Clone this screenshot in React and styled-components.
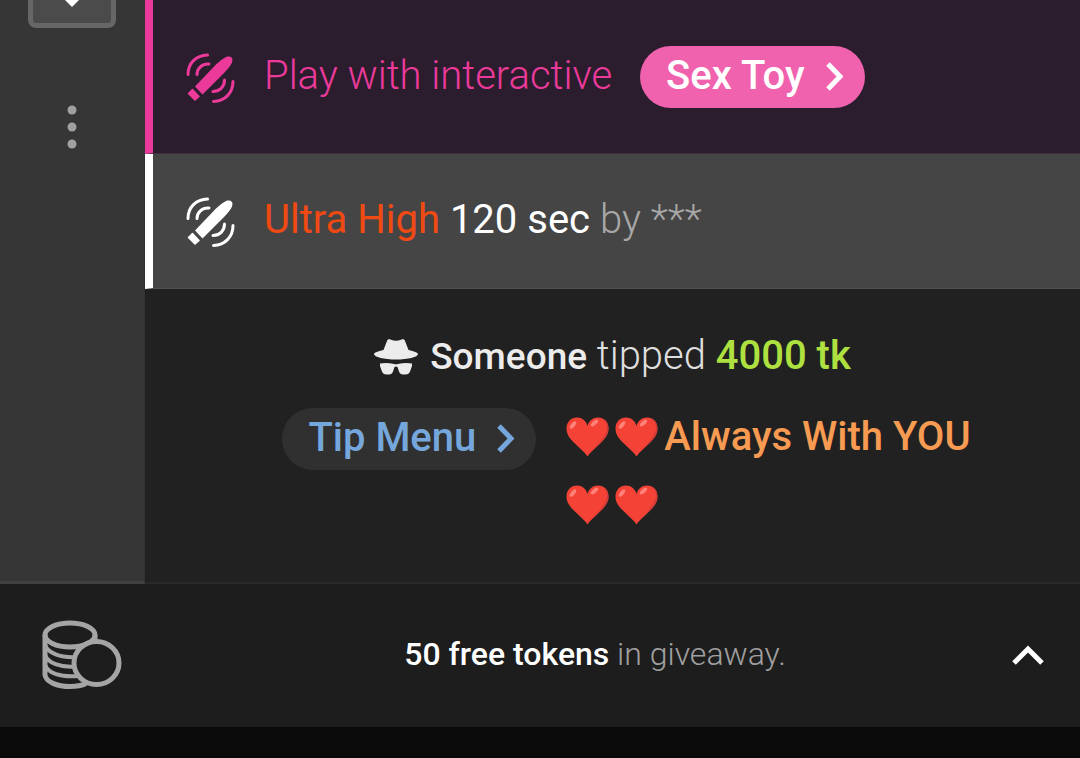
import React, { useState } from 'react';
import styled, { createGlobalStyle } from 'styled-components';

const GlobalStyle = createGlobalStyle`
  * {
    box-sizing: border-box;
  }
  body {
    margin: 0;
    background: #0a0a0a;
    font-family: Roboto, "Liberation Sans", sans-serif;
    font-size: 40px;
    line-height: 48px;
  }
  button {
    font: inherit;
    color: inherit;
    border: 0;
    cursor: pointer;
  }
  svg {
    display: block;
    flex: none;
  }
`;

const Page = styled.div`
  min-height: 100vh;
  padding-bottom: 31px;
  display: flex;
  flex-direction: column;
`;

const Content = styled.div`
  flex: 1;
  display: grid;
  grid-template-columns: 145px 1fr;
`;

const Sidebar = styled.aside`
  background: #363636;
  border-right: 1px solid #323232;
  border-bottom: 3px solid #404040;
  display: flex;
  flex-direction: column;
  align-items: center;
  gap: 74px;
`;

const DropButton = styled.button`
  width: 88px;
  height: 28px;
  padding: 0;
  display: flex;
  justify-content: center;
  align-items: flex-start;
  background: #4b4b4b;
  border: 5px solid #676767;
  border-top: 0;
  border-radius: 0 0 8px 8px;
`;

const MoreButton = styled.button`
  padding: 2px 16px;
  background: none;
  color: #a0a0a0;
`;

const Chat = styled.main`
  background: #212121;
  border-bottom: 2px solid #2a2a2a;
`;

const Notice = styled.div`
  display: flex;
  align-items: center;
  gap: 28px;
  height: ${(props) => (props.$promo ? '154px' : '135px')};
  padding: 0 32px;
  border-left: 8px solid ${(props) => (props.$promo ? '#ec3a9b' : '#fff')};
  border-bottom: 1px solid ${(props) => (props.$promo ? '#3f2f40' : '#4f4f4f')};
  background: ${(props) => (props.$promo ? '#2c1d2e' : '#454545')};
  color: ${(props) => (props.$promo ? '#ec3a9b' : '#fff')};
`;

const NoticeText = styled.p`
  margin: 0;
  padding-bottom: 2px;
  font-weight: ${(props) => (props.$light ? 300 : 400)};
`;

const Level = styled.span`
  color: #f04a14;
`;

const Author = styled.span`
  color: #a8a8a8;
  font-weight: 300;
`;

const Pill = styled.button`
  display: flex;
  align-items: center;
  gap: 18px;
  height: 62px;
  padding: 0 18px 2px 26px;
  border-radius: 32px;
  font-weight: 500;
  white-space: nowrap;
  background: ${(props) => (props.$pink ? '#f062ae' : '#303030')};
  color: ${(props) => (props.$pink ? '#fff' : '#75a7dc')};
`;

const Messages = styled.div`
  padding: 43px 24px 0;
  display: flex;
  flex-direction: column;
  align-items: center;
  gap: 27px;
`;

const TipLine = styled.p`
  margin: 0;
  display: flex;
  align-items: center;
  gap: 12px;
  color: #dedede;
  font-weight: 300;
`;

const Name = styled.strong`
  color: #ececec;
  font-size: 37px;
  font-weight: 500;
`;

const Amount = styled.strong`
  color: #aee13f;
  font-weight: 500;
`;

const MenuLine = styled.div`
  display: flex;
  align-items: flex-start;
  gap: 30px;
  padding-left: 28px;
`;

const MenuText = styled.div`
  padding-top: 5px;
  color: #f79a52;
  font-weight: 500;
  display: grid;
  gap: 20px;
`;

const HeartRow = styled.div`
  min-height: 48px;
  display: flex;
  align-items: center;
  gap: 6px;
`;

const Footer = styled.footer`
  height: 143px;
  padding: 0 32px 0 40px;
  display: grid;
  grid-template-columns: 142px 1fr 40px;
  align-items: center;
  background: #1d1d1d;
`;

const Giveaway = styled.p`
  margin: 0;
  padding-bottom: 4px;
  text-align: center;
  font-size: 32px;
  line-height: 40px;
  font-weight: 300;
  color: #a0a0a0;
`;

const Tokens = styled.strong`
  color: #fff;
  font-weight: 500;
`;

const ToggleButton = styled.button`
  padding: 0;
  background: none;
  color: #fff;
`;

function ToyIcon() {
  return (
    <svg width="51" height="54" viewBox="0 -3 51 54" fill="none" aria-hidden="true">
      <path
        d="M10 33.5 L31 11.5 Q36 6.5 41 4 C46 2.5 48.5 5 47 9.5 Q45 14 39 20 L17.5 41.5 Z"
        fill="currentColor"
      />
      <path
        d="M7.5 36.5 L14 43.5 L10 47 L3.5 40.5 Z"
        fill="currentColor"
        stroke="currentColor"
        strokeWidth="1.5"
        strokeLinejoin="round"
      />
      <path
        d="M3 21.5 C3 10 11 2.5 22.5 2 M12 21.5 C12 15.5 17 10.5 24 11 M39.5 27 C39.5 34 34.5 38.5 28 38.5 M48 28.5 C48 40 40 48 28.5 48.5"
        stroke="currentColor"
        strokeWidth="3"
        strokeLinecap="round"
      />
    </svg>
  );
}

function ChevronRight() {
  return (
    <svg width="24" height="32" viewBox="0 0 24 32" fill="none" aria-hidden="true">
      <path d="M5 4 L17 16.5 L5 29" stroke="currentColor" strokeWidth="5" />
    </svg>
  );
}

function IncognitoIcon() {
  return (
    <svg width="44" height="36" viewBox="0 0 44 36" fill="#ececec" aria-hidden="true">
      <path d="M13 2 C13.5 .2 15 0 17 .8 C20 2 24 2 27 .8 C29 0 30.5 .2 31 2 L34.5 11 C40 12.3 44 13.5 44 15 C44 18 34 20.5 22 20.5 S0 18 0 15 C0 13.5 4 12.3 9.5 11 Z" />
      <path d="M6 24.5 Q13 23.5 20 25 Q22 25.7 24 25 Q31 23.5 38 24.5 V27 L36 32.5 Q35 35.5 31.5 35.5 H29 Q26 35.5 25 32.5 L23.5 28 Q22 27 20.5 28 L19 32.5 Q18 35.5 15 35.5 H12.5 Q9 35.5 8 32.5 L6 27 Z" />
    </svg>
  );
}

function Heart() {
  return (
    <svg width="43" height="40" viewBox="0 0 43 40" role="img" aria-label="Red heart">
      <path
        d="M21.5 39.5 C19.5 36 15 32.5 9.5 27 C4 22 .5 17.5 .5 11.5 C.5 5 5 .5 11 .5 C16 .5 20 3.5 21.5 9 C23 3.5 27 .5 32 .5 C38 .5 42.5 5 42.5 11.5 C42.5 17.5 39 22 33.5 27 C28 32.5 23.5 36 21.5 39.5 Z"
        fill="#f44336"
      />
      <path
        d="M36 1.5 C40 4 41.500 8 41 12 C40 19 34 25 21.5 39 C24 35 28 32.5 33.5 27 C39 22 42.5 17.5 42.5 11.5 C42.5 6 40 2.5 36 1.5 Z"
        fill="#cf3b38"
      />
      <ellipse cx="7" cy="8" rx="2" ry="4.5" fill="#ff8278" transform="rotate(38 7 8)" />
      <ellipse cx="28.500" cy="6" rx="2" ry="4.5" fill="#ff8278" transform="rotate(48 28.5 6)" />
    </svg>
  );
}

function CoinsIcon() {
  return (
    <svg width="82" height="72" viewBox="0 0 82 72" fill="none" stroke="#a5a5a5" strokeWidth="5" aria-hidden="true">
      <ellipse cx="30" cy="15" rx="25" ry="12" />
      <path d="M5 15 V55 C6 62 17 66.5 30 66.5 C36 66.5 42 65.5 46 63.5 M55 15 V22" />
      <path d="M5 25 C8 33 20 38 37 37 M5 35 C8 43 20 47.5 35 46.5 M5 45 C8 53 20 57.5 39 56" strokeWidth="4" />
      <ellipse cx="56.5" cy="43" rx="22.5" ry="21.5" fill="#1d1d1d" />
    </svg>
  );
}

function App() {
  const [open, setOpen] = useState(false);

  return (
    <>
      <GlobalStyle />
      <Page>
        <Content>
          <Sidebar>
            <DropButton aria-label="Expand">
              <svg width="16" height="7" viewBox="0 0 16 7" aria-hidden="true">
                <path d="M1 0 H15 L8 7 Z" fill="#fff" />
              </svg>
            </DropButton>
            <MoreButton aria-label="More options">
              <svg width="10" height="46" viewBox="0 0 10 46" fill="currentColor" aria-hidden="true">
                <circle cx="5" cy="6" r="4.5" />
                <circle cx="5" cy="23" r="4.5" />
                <circle cx="5" cy="40" r="4.5" />
              </svg>
            </MoreButton>
          </Sidebar>

          <Chat>
            <Notice $promo>
              <ToyIcon />
              <NoticeText $light>Play with interactive</NoticeText>
              <Pill $pink>
                Sex Toy
                <ChevronRight />
              </Pill>
            </Notice>
            <Notice>
              <ToyIcon />
              <NoticeText>
                <Level>Ultra High</Level> 120 sec <Author>by ***</Author>
              </NoticeText>
            </Notice>

            <Messages>
              <TipLine>
                <IncognitoIcon />
                <span>
                  <Name>Someone</Name> tipped <Amount>4000 tk</Amount>
                </span>
              </TipLine>
              <MenuLine>
                <Pill>
                  Tip Menu
                  <ChevronRight />
                </Pill>
                <MenuText>
                  <HeartRow>
                    <Heart />
                    <Heart />
                    <span>Always With YOU</span>
                  </HeartRow>
                  <HeartRow>
                    <Heart />
                    <Heart />
                  </HeartRow>
                </MenuText>
              </MenuLine>
            </Messages>
          </Chat>
        </Content>

        <Footer>
          <CoinsIcon />
          <Giveaway>
            <Tokens>50 free tokens</Tokens> in giveaway.
          </Giveaway>
          <ToggleButton aria-label="Show giveaway" aria-expanded={open} onClick={() => setOpen(!open)}>
            <svg width="40" height="24" viewBox="0 0 40 24" fill="none" aria-hidden="true">
              <path d="M6 19 L20 5 L34 19" stroke="currentColor" strokeWidth="5" />
            </svg>
          </ToggleButton>
        </Footer>
      </Page>
    </>
  );
}

export default App;
